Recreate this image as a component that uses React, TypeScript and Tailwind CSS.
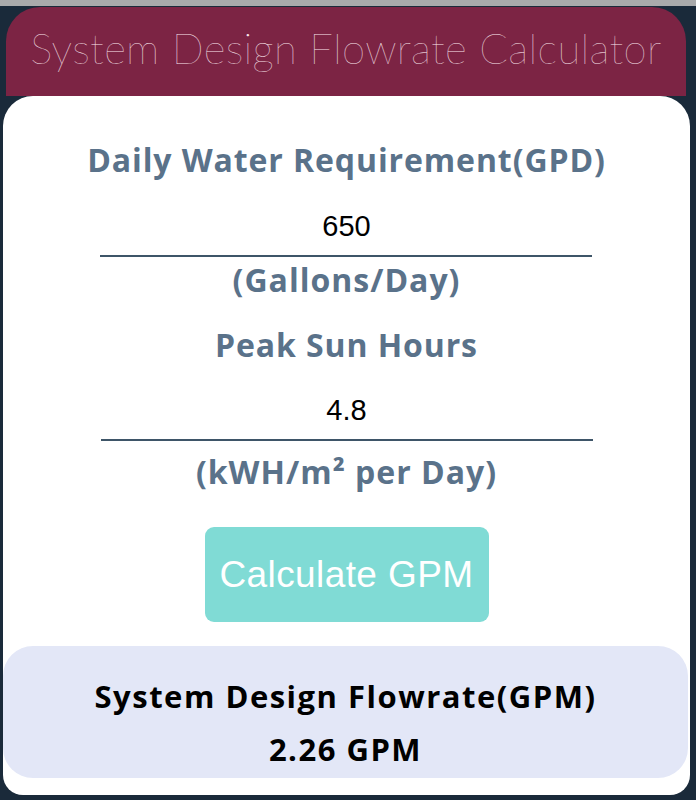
import { useState } from 'react'

// --- Labelled numeric input with underline ---

function FieldRow({
  label,
  unit,
  value,
  onChange,
  inputClass,
  unitClass,
}: {
  label: string
  unit: React.ReactNode
  value: string
  onChange: (v: string) => void
  inputClass: string
  unitClass: string
}) {
  return (
    <div className="flex flex-col items-center">
      <div className="h-[40px] leading-[40px] text-[32px] tracking-[0.9px] font-bold text-[#5a728a]">{label}</div>
      <input
        value={value}
        onChange={e => onChange(e.target.value)}
        className={`w-[492px] border-b-2 border-[#3e5568] bg-transparent text-center text-[29px] text-black outline-none font-['Liberation_Sans',Arial,sans-serif] ${inputClass}`}
      />
      <div className={`h-[40px] leading-[40px] text-[32px] tracking-[1px] font-bold text-[#5a728a] ${unitClass}`}>{unit}</div>
    </div>
  )
}

export default function App() {
  const [gpd, setGpd] = useState('650')
  const [sun, setSun] = useState('4.8')
  const [gpm, setGpm] = useState('2.26')

  const calculate = () => {
    const g = parseFloat(gpd)
    const s = parseFloat(sun)
    if (g > 0 && s > 0) setGpm((g / (s * 60)).toFixed(2))
  }

  return (
    <div className="min-h-[800px] bg-[#1a2a3a] font-['Open_Sans','Noto_Sans',sans-serif]">
      <div className="h-[6px] bg-[#a9aaab]" />
      <div className="ml-[6px] w-[680px] mt-[1px] h-[89px] rounded-t-[34px] bg-[#7c2444] flex items-center justify-center">
        <h1 className="font-['Lato',sans-serif] text-[42px] font-extralight tracking-[0.3px] text-[#fbe6ed] leading-none pb-[8px]">
          System Design Flowrate Calculator
        </h1>
      </div>
      <div className="ml-[3px] w-[687px] h-[699px] bg-white rounded-t-[30px] rounded-b-[20px] flex flex-col items-center pt-[44px]">
        <FieldRow
          label="Daily Water Requirement(GPD)"
          unit="(Gallons/Day)"
          value={gpd}
          onChange={setGpd}
          inputClass="mt-[22px] h-[55px] pb-[4px]"
          unitClass="mt-[3px]"
        />
        <div className="mt-[25px]">
          <FieldRow
            label="Peak Sun Hours"
            unit="(kWH/m² per Day)"
            value={sun}
            onChange={setSun}
            inputClass="mt-[21px] h-[55px] pb-[4px]"
            unitClass="mt-[11px]"
          />
        </div>
        <button
          onClick={calculate}
          className="mt-[35px] w-[284px] h-[95px] rounded-[9px] bg-[#80dbd5] text-white text-[37px] tracking-[0.4px] font-['Liberation_Sans',Arial,sans-serif]"
        >
          Calculate GPM
        </button>
        <div className="mt-[24px] self-stretch mr-[2px] h-[132px] rounded-[30px] bg-[#e3e7f7] flex flex-col items-center pt-[30px] text-black font-bold tracking-[1.5px]">
          <div className="text-[31px] leading-[40px]">System Design Flowrate(GPM)</div>
          <div className="text-[31px] leading-[40px] mt-[13px]">{gpm} GPM</div>
        </div>
      </div>
    </div>
  )
}
